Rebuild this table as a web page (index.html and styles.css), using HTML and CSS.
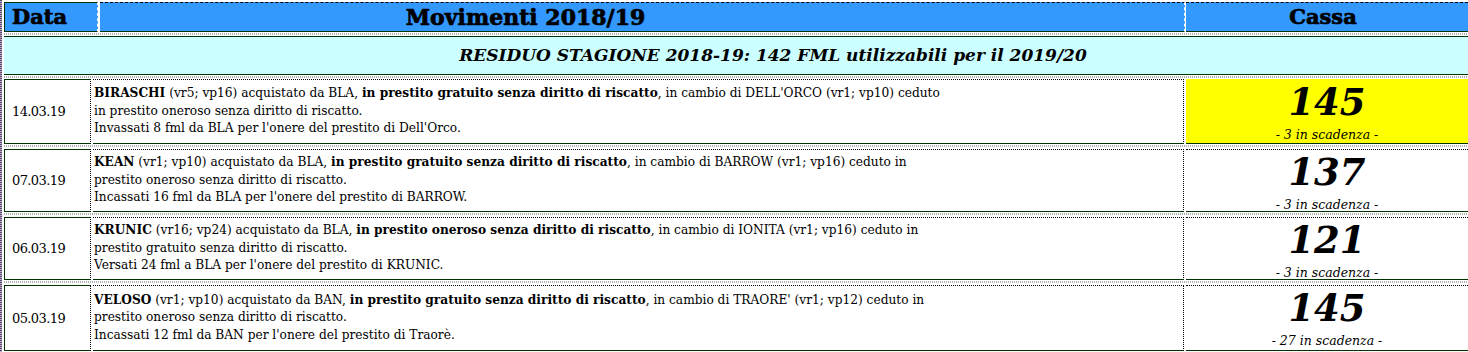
FILE: index.html
```html
<!DOCTYPE html>
<html lang="it">
<head>
<meta charset="utf-8">
<title>Movimenti 2018/19</title>
<link rel="stylesheet" href="styles.css">
</head>
<body>
<div class="sheet">
  <div class="hdr">
    <div class="hcell h-data">Data</div>
    <div class="hcell h-mov">Movimenti 2018/19</div>
    <div class="hcell h-cassa">Cassa</div>
  </div>
  <div class="grid-gap"></div>
  <div class="residuo">RESIDUO STAGIONE 2018-19: 142 FML utilizzabili per il 2019/20</div>
  <div class="grid-gap"></div>

  <div class="row row-1">
    <div class="c-data">14.03.19</div>
    <div class="c-mov"><div class="txt"><b>BIRASCHI</b> (vr5; vp16) acquistato da BLA, <b>in prestito gratuito senza diritto di riscatto</b>, in cambio di DELL'ORCO (vr1; vp10) ceduto<br>in prestito oneroso senza diritto di riscatto.<br>Invassati 8 fml da BLA per l'onere del prestito di Dell'Orco.</div></div>
    <div class="c-cassa yellow"><div class="num">145</div><div class="sub">- 3 in scadenza -</div></div>
  </div>
  <div class="grid-gap"></div>

  <div class="row row-2">
    <div class="c-data">07.03.19</div>
    <div class="c-mov"><div class="txt"><b>KEAN</b> (vr1; vp10) acquistato da BLA, <b>in prestito gratuito senza diritto di riscatto</b>, in cambio di BARROW (vr1; vp16) ceduto in<br>prestito oneroso senza diritto di riscatto.<br>Incassati 16 fml da BLA per l'onere del prestito di BARROW.</div></div>
    <div class="c-cassa"><div class="num">137</div><div class="sub">- 3 in scadenza -</div></div>
  </div>
  <div class="grid-gap"></div>

  <div class="row row-3">
    <div class="c-data">06.03.19</div>
    <div class="c-mov"><div class="txt"><b>KRUNIC</b> (vr16; vp24) acquistato da BLA, <b>in prestito oneroso senza diritto di riscatto</b>, in cambio di IONITA (vr1; vp16) ceduto in<br>prestito gratuito senza diritto di riscatto.<br>Versati 24 fml a BLA per l'onere del prestito di KRUNIC.</div></div>
    <div class="c-cassa"><div class="num">121</div><div class="sub">- 3 in scadenza -</div></div>
  </div>
  <div class="grid-gap"></div>

  <div class="row row-4">
    <div class="c-data">05.03.19</div>
    <div class="c-mov"><div class="txt"><b>VELOSO</b> (vr1; vp10) acquistato da BAN, <b>in prestito gratuito senza diritto di riscatto</b>, in cambio di TRAORE' (vr1; vp12) ceduto in<br>prestito oneroso senza diritto di riscatto.<br>Incassati 12 fml da BAN per l'onere del prestito di Traorè.</div></div>
    <div class="c-cassa"><div class="num">145</div><div class="sub">- 27 in scadenza -</div></div>
  </div>
</div>
</body>
</html>
```

FILE: styles.css
```css
html, body {
  margin: 0;
  padding: 0;
  background: #fff;
  overflow: hidden;
}
body {
  font-family: "DejaVu Serif", serif;
  color: #000;
}
.sheet {
  position: relative;
  padding: 2px 0 0 4px;
  width: 1468px;
  height: 352px;
  box-sizing: border-box;
  overflow: hidden;
}
.sheet::before {
  content: "";
  position: absolute;
  left: 0;
  top: 0;
  bottom: 0;
  width: 2px;
  background: repeating-linear-gradient(180deg, #5b4a6e 0 1px, #b8acc4 1px 2px);
}

/* header */
.hdr {
  display: flex;
  height: 30px;
}
.hcell {
  background: #3399ff;
  border-top: 1px dashed #000;
  border-bottom: 1px solid #003300;
  height: 30px;
  box-sizing: border-box;
  line-height: 28px;
  font-weight: bold;
  font-size: 22px;
  text-align: center;
  white-space: nowrap;
  -webkit-text-stroke: 0.7px #000;
}
.h-data {
  width: 94px;
  border-left: 1px solid #003300;
  border-top: 1px solid #003300;
  border-right: 1px dashed #fff;
  text-align: left;
  padding-left: 7px;
  font-size: 21px;
}
.h-mov {
  margin-left: 2px;
  width: 1085px;
  border-right: 1px dashed #fff;
  padding-right: 233px;
}
.h-cassa {
  margin-left: 1px;
  flex: 1;
  font-size: 21px;
  padding-right: 8px;
}

/* excel gridline gaps */
.grid-gap {
  height: 4px;
  background:
    repeating-linear-gradient(90deg, #b0b0b0 0 1px, #fff 1px 2px) 0 1px / 100% 2px no-repeat,
    #fff;
}
.row + .grid-gap {
  height: 5px;
}

/* residuo */
.residuo {
  background: #ccffff;
  border-top: 1px solid #003300;
  border-bottom: 1px solid #003300;
  height: 39px;
  box-sizing: border-box;
  line-height: 37px;
  font-size: 17px;
  font-weight: bold;
  font-style: italic;
  text-align: center;
  padding-left: 74px;
  white-space: nowrap;
}

/* rows */
.row {
  display: flex;
  height: 65px;
}
.row-2, .row-3 { height: 63px; }
.row-4 { height: 66px; }

.c-data, .c-mov, .c-cassa {
  box-sizing: border-box;
  border-bottom: 1px solid #003300;
  display: flex;
  flex-direction: column;
  justify-content: center;
}
.c-data {
  width: 87px;
  border-left: 1px solid #003300;
  border-top: 1px solid #003300;
  border-right: 1px dotted #000;
  font-size: 13px;
  letter-spacing: -0.6px;
  padding-left: 7px;
}
.c-mov {
  margin-left: 2px;
  width: 1091px;
  border-top: 1px dotted #000;
  border-right: 1px dotted #000;
  padding-left: 1px;
  font-size: 12.2px;
  line-height: 17.5px;
  white-space: nowrap;
}
.c-cassa {
  margin-left: 2px;
  flex: 1;
  border-top: 1px dotted #000;
  justify-content: flex-start;
  align-items: center;
  padding-top: 4px;
}
.c-cassa.yellow {
  background: #ffff00;
  border-top: 1px solid #ffff00;
}
.num {
  font-size: 37px;
  line-height: 36px;
  font-weight: bold;
  font-style: italic;
}
.sub {
  margin-top: 8px;
  font-size: 12.5px;
  line-height: 14px;
  font-style: italic;
}
```
